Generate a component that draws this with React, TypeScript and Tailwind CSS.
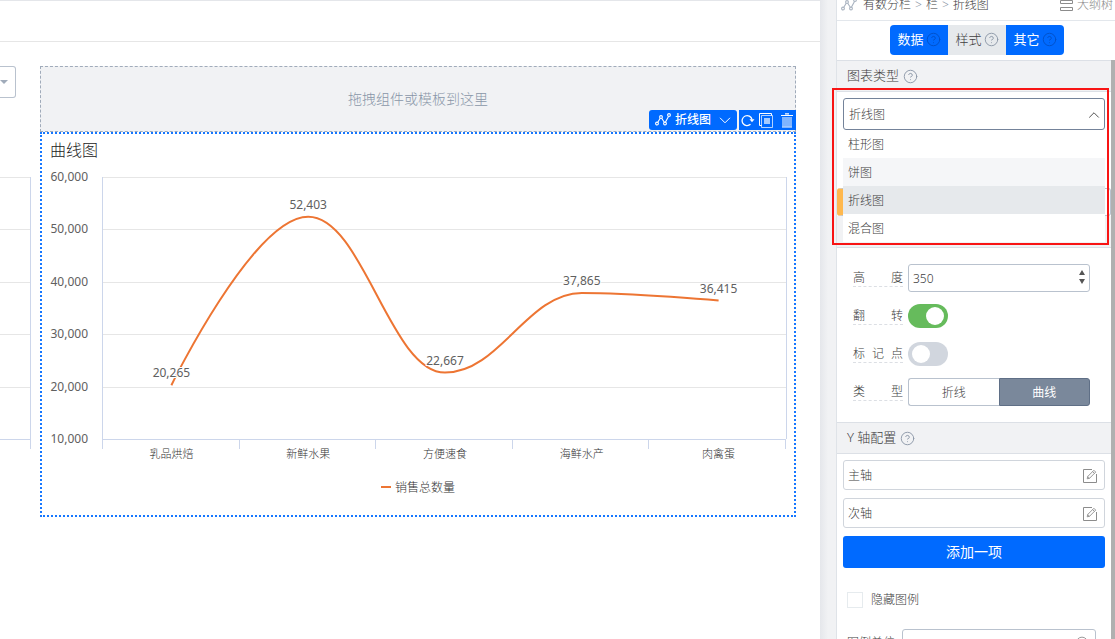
import { useState } from 'react';
import type { ReactNode } from 'react';
import { ChevronDown, ChevronUp, CircleQuestionMark } from 'lucide-react';
import clsx from 'clsx';

interface Point {
  x: number;
  y: number;
}

const CHART_TYPES = ['柱形图', '饼图', '折线图', '混合图'];

const SALES = [
  { category: '乳品烘焙', value: 20265 },
  { category: '新鲜水果', value: 52403 },
  { category: '方便速食', value: 22667 },
  { category: '海鲜水产', value: 37865 },
  { category: '肉禽蛋', value: 36415 },
];

const GRID = [
  { value: 60000, y: 11 },
  { value: 50000, y: 63 },
  { value: 40000, y: 116 },
  { value: 30000, y: 168 },
  { value: 20000, y: 221 },
  { value: 10000, y: 273 },
];

const TICKS = [60, 197, 333, 470, 606, 743];

const PLOT = { left: 60, right: 744, top: 11, bottom: 273, min: 10000, max: 60000 };

// Keeps the curve from overshooting its points, as Highcharts' spline does
function splinePath(points: Point[]) {
  const smoothing = 1.5;
  let path = `M ${points[0].x} ${points[0].y}`;
  let start = points[0];

  for (let i = 1; i < points.length; i++) {
    const last = points[i - 1];
    const point = points[i];
    const next = points[i + 1];
    let left = point;
    let right = point;

    if (next) {
      const leftX = (smoothing * point.x + last.x) / (smoothing + 1);
      const rightX = (smoothing * point.x + next.x) / (smoothing + 1);
      let leftY = (smoothing * point.y + last.y) / (smoothing + 1);
      let rightY = (smoothing * point.y + next.y) / (smoothing + 1);
      const correction = ((rightY - leftY) * (rightX - point.x)) / (rightX - leftX) + point.y - rightY;
      leftY += correction;
      rightY += correction;

      const leftClamped = clampBetween(leftY, last.y, point.y);
      if (leftClamped !== leftY) {
        leftY = leftClamped;
        rightY = 2 * point.y - leftY;
      }
      const rightClamped = clampBetween(rightY, next.y, point.y);
      if (rightClamped !== rightY) {
        rightY = rightClamped;
        leftY = 2 * point.y - rightY;
      }
      left = { x: leftX, y: leftY };
      right = { x: rightX, y: rightY };
    }

    path += ` C ${start.x} ${start.y} ${left.x} ${left.y} ${point.x} ${point.y}`;
    start = right;
  }
  return path;
}

function clampBetween(value: number, a: number, b: number) {
  return Math.min(Math.max(value, Math.min(a, b)), Math.max(a, b));
}

function LineIcon({ className }: { className?: string }) {
  return (
    <svg viewBox="0 0 16 14" fill="none" stroke="currentColor" strokeWidth="1.1" className={className}>
      <circle cx="2" cy="10.5" r="1.4" />
      <circle cx="6" cy="4" r="1.4" />
      <circle cx="10" cy="10.5" r="1.4" />
      <circle cx="14" cy="2" r="1.4" />
      <path d="M2.8 9.2 5.2 5.3M6.7 5.3l2.6 3.9M10.5 9.1l3-5.7" />
    </svg>
  );
}

function EditIcon() {
  return (
    <svg viewBox="0 0 14 14" fill="none" stroke="currentColor" className="size-3.5">
      <path d="M9 .5H.5v13h13V5" />
      <path d="M4.2 9.8l.5-2.3 6.2-6.2 1.8 1.8-6.2 6.2zM9.6 2.6l1.8 1.8M4.7 7.5l1.8 1.8" strokeWidth=".9" />
    </svg>
  );
}

function SectionHeader({ title }: { title: string }) {
  return (
    <h2 className="flex h-8 items-center gap-1 border-y border-[#dce0e6] bg-[#f1f2f4] px-2.5 text-[13px] text-[#404040]">
      {title}
      <CircleQuestionMark size={15} strokeWidth={1.5} className="text-[#8c98a8]" />
    </h2>
  );
}

function SalesChart() {
  const step = (PLOT.right - PLOT.left) / SALES.length;
  const points = SALES.map(({ value }, index) => ({
    x: PLOT.left + step * (index + 0.5) + 1,
    y: PLOT.bottom - ((value - PLOT.min) / (PLOT.max - PLOT.min)) * (PLOT.bottom - PLOT.top),
  }));

  return (
    <svg viewBox="0 0 752 349" className="block w-full" role="img" aria-label="销售总数量">
      <g shapeRendering="crispEdges">
        {GRID.map(({ value, y }) => (
          <rect key={value} x="60" y={y} width="684" height="1" fill={value === PLOT.min ? '#ccd6eb' : '#e6e6e6'} />
        ))}
        <rect x="60" y="11" width="1" height="262" fill="#ccd6eb" />
        <rect x="744" y="11" width="1" height="262" fill="#ccd6eb" />
        {TICKS.map((x) => (
          <rect key={x} x={x} y="273" width="1" height="10" fill="#ccd6eb" />
        ))}
      </g>
      <path d={splinePath(points)} fill="none" stroke="#ed7533" strokeWidth="2" strokeLinejoin="round" />
      <g fill="#606060" fontSize="12" className="font-normal">
        {GRID.map(({ value, y }) => (
          <text key={value} x="46" y={y + 4} textAnchor="end">
            {value.toLocaleString('en-US')}
          </text>
        ))}
        {SALES.map(({ category, value }, index) => (
          <text
            key={category}
            x={points[index].x}
            y={points[index].y - 8}
            textAnchor="middle"
            stroke="#fff"
            strokeWidth="2"
            paintOrder="stroke"
          >
            {value.toLocaleString('en-US')}
          </text>
        ))}
      </g>
      <g fill="#333" fontSize="11">
        {SALES.map(({ category }, index) => (
          <text key={category} x={points[index].x} y="292" textAnchor="middle">
            {category}
          </text>
        ))}
      </g>
      <rect x="339" y="320" width="10" height="2" fill="#ed7533" />
      <text x="353" y="326" fontSize="12" fill="#333">
        销售总数量
      </text>
    </svg>
  );
}

function Canvas() {
  return (
    <main className="min-w-0 flex-1 border-t border-[#e4e6ea] bg-white">
      <div className="h-[41px] border-b border-[#e6e6e6]" />
      <div className="flex gap-2 pt-6 pr-6">
        <div className="flex w-8 shrink-0 flex-col">
          <div className="relative h-8 w-4">
            <select aria-label="筛选" className="size-full appearance-none rounded-r-[3px] border border-l-0 border-[#b9c2ce]" />
            <span className="pointer-events-none absolute top-3.5 left-0 border-x-4 border-t-4 border-x-transparent border-t-[#a0abba]" />
          </div>
          <svg viewBox="0 0 32 290" className="mt-[79px] block w-8" shapeRendering="crispEdges">
            {GRID.map(({ value, y }) => (
              <rect key={value} x="0" y={y - 11} width="30" height="1" fill={value === PLOT.min ? '#ccd6eb' : '#e6e6e6'} />
            ))}
            <rect x="30" y="0" width="1" height="272" fill="#ccd6eb" />
          </svg>
        </div>
        <div className="min-w-0 flex-1">
          <div className="flex h-[66px] items-center justify-center border border-dashed border-[#a0abba] bg-[#f1f2f4] text-sm text-[#8996a8]">
            拖拽组件或模板到这里
          </div>
          <section className="relative border-2 border-dotted border-[#1677ff]">
            <div className="absolute -top-6 -right-0.5 flex h-5 gap-0.5 text-white">
              <button type="button" className="flex items-center gap-1 rounded-[3px] bg-[#006aff] px-1.5 text-xs font-medium">
                <LineIcon className="w-4" />
                折线图
                <svg viewBox="0 0 12 7" fill="none" stroke="currentColor" className="ml-1 w-3">
                  <path d="M1 .8 6 5.8 11 .8" />
                </svg>
              </button>
              <div className="flex items-center gap-1 bg-[#006aff] px-0.5">
                <button type="button" aria-label="刷新">
                  <svg viewBox="0 0 14 14" fill="none" stroke="currentColor" strokeWidth="1.3" className="size-3.5">
                    <path d="M9.5 11.300A5 5 0 1 1 11 6.500" />
                    <path d="M8.500 6.300h5L11 9.300z" fill="currentColor" stroke="none" />
                  </svg>
                </button>
                <button type="button" aria-label="复制">
                  <svg viewBox="0 0 15 15" fill="none" stroke="currentColor" className="size-[15px]">
                    <path d="M2.5 12.5h-2V.5h12v2" />
                    <path d="M2.5 2.5h11v12h-11z" strokeOpacity=".7" />
                    <path d="M5 5h6v6H5z" fill="currentColor" stroke="none" opacity=".65" />
                  </svg>
                </button>
                <button type="button" aria-label="删除" className="pl-0.5">
                  <svg viewBox="0 0 14 15" fill="none" stroke="currentColor" className="h-[15px] w-3.5">
                    <path d="M2 4h10v9.500H2z" fill="currentColor" stroke="none" opacity=".5" />
                    <path d="M1 2.500h12M5 .8h4M2 14h10" strokeWidth="1.2" />
                  </svg>
                </button>
              </div>
            </div>
            <h1 className="px-2 text-base leading-8 text-[#222]">曲线图</h1>
            <SalesChart />
          </section>
        </div>
      </div>
    </main>
  );
}

function TabButton({ label, active }: { label: string; active: boolean }) {
  return (
    <button
      type="button"
      className={clsx(
        'flex h-[30px] w-[58px] items-center justify-center gap-0.5 text-[13px] first:rounded-l-[4px] last:rounded-r-[4px]',
        active ? 'bg-[#006aff] font-normal text-white' : 'bg-[#e6e9ec] text-[#404040]'
      )}
    >
      {label}
      <CircleQuestionMark size={15} strokeWidth={1.5} className={active ? 'text-[#0050c8]' : 'text-[#8c98a8]'} />
    </button>
  );
}

function FieldRow({ id, label, children }: { id: string; label: string; children: ReactNode }) {
  return (
    <div className="flex h-7 items-center gap-[5px]">
      <label
        htmlFor={id}
        className="w-[50px] border-b border-dashed border-[#dcdfe4] text-xs leading-4 [text-align-last:justify]"
      >
        {label}
      </label>
      {children}
    </div>
  );
}

function Switch({ id, defaultChecked }: { id: string; defaultChecked?: boolean }) {
  return (
    <input
      id={id}
      type="checkbox"
      role="switch"
      defaultChecked={defaultChecked}
      className="h-6 w-10 appearance-none rounded-full bg-[#d1d6de] p-[3px] px-1 before:block before:size-[18px] before:rounded-full before:bg-white checked:bg-[#66bb5c] checked:before:ml-3.5"
    />
  );
}

function AxisField({ label }: { label: string }) {
  return (
    <div className="flex h-[30px] items-center rounded-[3px] border border-[#d0d5dc] pr-[7px] pl-1 text-xs">
      <input aria-label={label} defaultValue={label} className="min-w-0 flex-1 pt-0.5 outline-none" />
      <button type="button" aria-label={`编辑${label}`} className="pt-0.5 text-[#8c8c8c]">
        <EditIcon />
      </button>
    </div>
  );
}

function SettingsPanel() {
  const [chartType, setChartType] = useState('折线图');
  const [height, setHeight] = useState(350);
  const [curve, setCurve] = useState(true);

  return (
    <aside className="flex w-[279px] shrink-0 flex-col border-l border-[#dfe3e8] bg-white text-[#404040]">
      <nav className="-mt-3 flex h-[33px] shrink-0 items-center gap-1 border-b border-[#e3e7ec] pt-0.5 pr-0.5 pl-1 text-xs">
        <LineIcon className="mr-0.5 w-4 text-[#a9b3c0]" />
        <a href="#column-layout">有数分栏</a>
        <span className="text-[#8c98a8]">&gt;</span>
        <a href="#column">栏</a>
        <span className="text-[#8c98a8]">&gt;</span>
        <a href="#line-chart">折线图</a>
        <button type="button" className="ml-auto flex items-center gap-1 text-[#8c8c8c]">
          <svg viewBox="0 0 13 14" fill="none" stroke="currentColor" className="h-3.5 w-[13px]">
            <path d="M.5 2.500h12v3H.5zM.5 9.500h12v3H.5z" />
          </svg>
          大纲树
        </button>
      </nav>
      <div className="flex h-[39px] shrink-0 items-center justify-center pb-0.5 pl-0.5">
        <TabButton label="数据" active />
        <TabButton label="样式" active={false} />
        <TabButton label="其它" active />
      </div>

      <div className="flex">
        <div className="min-w-0 flex-1">
          <SectionHeader title="图表类型" />
          <div className="relative">
            <div className="px-1.5 pt-1.5">
              <div className="relative">
                <select
                  aria-label="图表类型"
                  value={chartType}
                  onChange={(e) => setChartType(e.target.value)}
                  className="h-8 w-full appearance-none rounded-[3px] border border-[#74839a] bg-white px-[5px] pt-0.5 text-xs"
                >
                  {CHART_TYPES.map((type) => (
                    <option key={type}>{type}</option>
                  ))}
                </select>
                <ChevronUp size={18} strokeWidth={1.2} className="pointer-events-none absolute top-2 right-0.5" />
                <ul className="absolute inset-x-0 top-8 z-10 bg-white text-xs leading-[26px]">
                  {CHART_TYPES.map((type) => (
                    <li key={type}>
                      <button
                        type="button"
                        onClick={() => setChartType(type)}
                        className={clsx(
                          'block w-full px-[5px] pt-0.5 text-left',
                          type === chartType ? 'bg-[#e6e9ec]' : type === '饼图' && 'bg-[#f5f6f8]'
                        )}
                      >
                        {type}
                      </button>
                    </li>
                  ))}
                </ul>
              </div>
            </div>
            <div className="mt-[58px] h-7 rounded-[3px] border border-l-[6px] border-[#b9c2ce] border-l-[#ffb84d]" />
            <div className="h-8 border-b border-[#dce0e6] bg-[#f1f2f4]" />
            {/* highlight around the open type list */}
            <div className="pointer-events-none absolute -top-1 right-0.5 -left-[5px] z-20 h-[157px] border-2 border-[#f81414]" />
          </div>

          <div className="flex flex-col gap-2.5 py-4 pr-[21px] pl-4">
            <FieldRow id="chart-height" label="高度">
              <div className="flex h-7 min-w-0 flex-1 items-center rounded-[3px] border border-[#b9c2ce] pr-1 pl-1">
                <input
                  id="chart-height"
                  type="number"
                  value={height}
                  onChange={(e) => setHeight(Number(e.target.value))}
                  className="min-w-0 flex-1 appearance-none pt-0.5 text-xs outline-none [appearance:textfield]"
                />
                <div className="flex flex-col gap-1 pb-0.5">
                  <button
                    type="button"
                    aria-label="增加高度"
                    onClick={() => setHeight(height + 1)}
                    className="border-x-[3px] border-b-[5px] border-x-transparent border-b-[#555]"
                  />
                  <button
                    type="button"
                    aria-label="减少高度"
                    onClick={() => setHeight(height - 1)}
                    className="border-x-[3px] border-t-[5px] border-x-transparent border-t-[#555]"
                  />
                </div>
              </div>
            </FieldRow>
            <FieldRow id="flip" label="翻转">
              <Switch id="flip" defaultChecked />
            </FieldRow>
            <FieldRow id="marker" label="标记点">
              <Switch id="marker" />
            </FieldRow>
            <FieldRow id="line-style" label="类型">
              <div className="flex h-7 flex-1 text-xs">
                <button
                  id="line-style"
                  type="button"
                  onClick={() => setCurve(false)}
                  className={clsx(
                    'flex-1 rounded-l-[3px] border pt-0.5',
                    curve ? 'border-r-0 border-[#b9c2ce]' : 'border-[#5f6f86] bg-[#7a889b] text-white'
                  )}
                >
                  折线
                </button>
                <button
                  type="button"
                  onClick={() => setCurve(true)}
                  className={clsx(
                    'flex-1 rounded-r-[3px] border pt-0.5',
                    curve ? 'border-[#5f6f86] bg-[#7a889b] font-normal text-white' : 'border-l-0 border-[#b9c2ce]'
                  )}
                >
                  曲线
                </button>
              </div>
            </FieldRow>
          </div>

          <SectionHeader title="Y 轴配置" />
          <div className="flex flex-col gap-2 px-1.5 pt-1.5">
            <AxisField label="主轴" />
            <AxisField label="次轴" />
            <button type="button" className="h-8 rounded-[3px] bg-[#006aff] text-sm font-normal text-white">
              添加一项
            </button>
          </div>
          <label className="mt-6 ml-2.5 flex h-4 items-center gap-2 text-xs">
            <input type="checkbox" className="size-4 appearance-none border border-[#e6ebee]" />
            隐藏图例
          </label>
          <div className="mt-[21px] flex items-center gap-[7px] pr-[15px] pl-2.5 text-xs">
            <label htmlFor="legend-unit" className="w-12 shrink-0">
              图例单位
            </label>
            <div className="flex h-7 min-w-0 flex-1 items-center rounded-[3px] border border-[#b9c2ce] pr-1.5 pl-1">
              <input id="legend-unit" className="min-w-0 flex-1 outline-none" />
              <CircleQuestionMark size={14} strokeWidth={1.5} className="text-[#8c8c8c]" />
            </div>
          </div>
        </div>
        <div className="w-1 shrink-0 bg-[#b0b0b0]" />
      </div>
    </aside>
  );
}

export default function App() {
  return (
    <div className="flex h-screen overflow-hidden bg-[#f1f2f4] font-['Noto_Sans','Noto_Sans_CJK_SC',sans-serif] font-light">
      <Canvas />
      <div className="w-4 shrink-0 bg-linear-to-r from-[#e5e7eb] to-[#f1f2f4] to-50%" />
      <SettingsPanel />
    </div>
  );
}
